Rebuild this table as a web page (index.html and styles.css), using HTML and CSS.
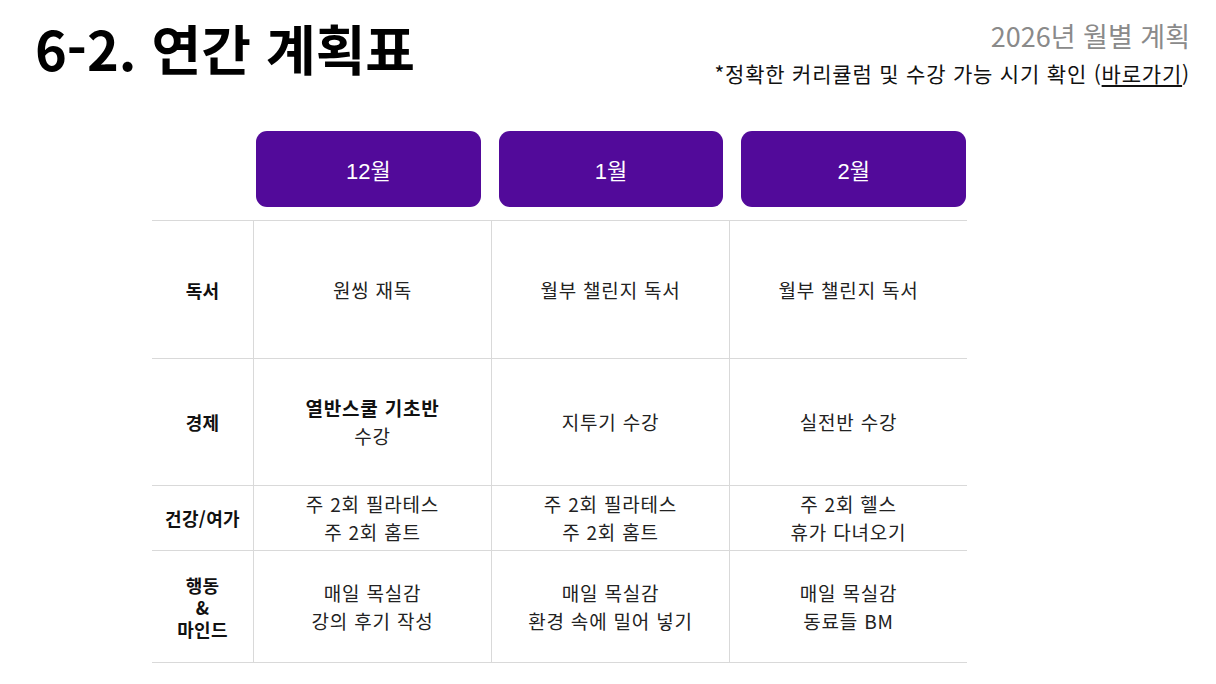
FILE: index.html
```html
<!DOCTYPE html>
<html lang="ko">
<head>
<meta charset="utf-8">
<title>6-2. 연간 계획표</title>
<link rel="stylesheet" href="styles.css">
</head>
<body>
<header class="top">
  <h1 class="title">6-2. 연간 계획표</h1>
  <div class="side">
    <div class="sub">2026년 월별 계획</div>
    <div class="note">*정확한 커리큘럼 및 수강 가능 시기 확인 (<a class="link" href="#">바로가기</a>)</div>
  </div>
</header>
<main class="plan">
  <div class="months">
    <div class="pill">12월</div>
    <div class="pill">1월</div>
    <div class="pill">2월</div>
  </div>
  <div class="grid">
    <div class="cell label">독서</div>
    <div class="cell">원씽 재독</div>
    <div class="cell">월부 챌린지 독서</div>
    <div class="cell">월부 챌린지 독서</div>

    <div class="cell label">경제</div>
    <div class="cell"><span><b>열반스쿨 기초반</b><br>수강</span></div>
    <div class="cell">지투기 수강</div>
    <div class="cell">실전반 수강</div>

    <div class="cell label">건강/여가</div>
    <div class="cell"><span>주 2회 필라테스<br>주 2회 홈트</span></div>
    <div class="cell"><span>주 2회 필라테스<br>주 2회 홈트</span></div>
    <div class="cell"><span>주 2회 헬스<br>휴가 다녀오기</span></div>

    <div class="cell label tight"><span>행동<br>&amp;<br>마인드</span></div>
    <div class="cell"><span>매일 목실감<br>강의 후기 작성</span></div>
    <div class="cell"><span>매일 목실감<br>환경 속에 밀어 넣기</span></div>
    <div class="cell"><span>매일 목실감<br>동료들 BM</span></div>
  </div>
</main>
</body>
</html>
```

FILE: styles.css
```css
* { box-sizing: border-box; }
html, body { margin: 0; padding: 0; background: #fff; }
body {
  width: 1216px;
  height: 684px;
  overflow: hidden;
  font-family: "Noto Sans CJK KR", "Noto Sans", sans-serif;
  color: #222;
}
.top {
  display: flex;
  justify-content: space-between;
  align-items: flex-start;
  padding: 0 26px 0 35px;
  height: 131px;
}
.title {
  margin: 15px 0 0 0;
  font-size: 54px;
  line-height: 66px;
  font-weight: 700;
  color: #000;
  letter-spacing: 0;
}
.side {
  display: flex;
  flex-direction: column;
  align-items: flex-end;
  padding-top: 17px;
}
.sub {
  font-size: 27px;
  line-height: 38px;
  color: #8a8a8a;
  font-weight: 400;
}
.note {
  font-size: 21px;
  line-height: 30px;
  letter-spacing: 0.8px;
  color: #111;
  margin-top: 3px;
}
.link { color: #111; text-decoration: underline; text-underline-offset: 3px; }

.plan {
  margin-left: 152px;
  width: 815px;
}
.months {
  display: grid;
  grid-template-columns: repeat(3, 1fr);
  gap: 18px;
  padding: 0 1px 0 104px;
}
.pill {
  height: 76px;
  border-radius: 11px;
  background: #520a9a;
  color: #fff;
  display: flex;
  align-items: center;
  justify-content: center;
  font-size: 22px;
  font-family: "Liberation Sans", "Noto Sans CJK KR", sans-serif;
}
.grid {
  margin-top: 13px;
  display: grid;
  grid-template-columns: 101px repeat(3, 238px);
  grid-template-rows: 138px 127px 65px 112px;
  border-bottom: 1px solid #d9d9d9;
}
.cell {
  border-top: 1px solid #d9d9d9;
  border-left: 1px solid #d9d9d9;
  display: flex;
  align-items: center;
  justify-content: center;
  text-align: center;
  font-size: 19px;
  line-height: 28px;
  letter-spacing: 0.8px;
  color: #222;
}
.cell b { font-weight: 700; color: #111; }
.label {
  border-left: none;
  font-weight: 700;
  font-size: 18px;
  letter-spacing: 0.3px;
  color: #111;
}
.tight { line-height: 22px; }
```
